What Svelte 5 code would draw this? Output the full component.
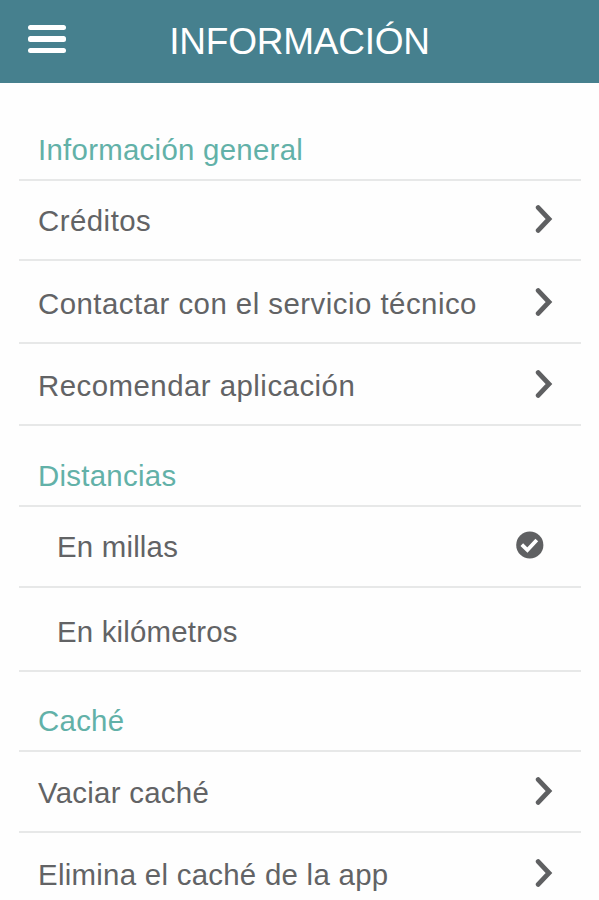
<script lang="ts">
	// Settings / information screen: grouped rows under a fixed title bar.
	const sections = [
		{
			title: 'Información general',
			kind: 'general',
			items: ['Créditos', 'Contactar con el servicio técnico', 'Recomendar aplicación']
		},
		{ title: 'Distancias', kind: 'options', items: ['En millas', 'En kilómetros'] },
		{ title: 'Caché', kind: 'cache', items: ['Vaciar caché', 'Elimina el caché de la app'] }
	];

	let unit = $state('En millas');
</script>

<div class="screen">
	<header class="bar">
		<button class="menu" aria-label="Menú">
			<span></span>
			<span></span>
			<span></span>
		</button>
		<h1>INFORMACIÓN</h1>
	</header>

	<main>
		{#each sections as section (section.title)}
			<section class={section.kind}>
				<h2>{section.title}</h2>
				{#each section.items as item (item)}
					{#if section.kind === 'options'}
						<button class="row" onclick={() => (unit = item)}>
							<span class="label">{item}</span>
							{#if unit === item}
								<svg class="check" width="28" height="28" viewBox="0 0 28 28">
									<circle cx="13.8" cy="14" r="13.6" fill="#5f6062" />
									<path d="M5.8 13.6l5.6 5.4L20.8 9" fill="none" stroke="#fff" stroke-width="3.8" />
								</svg>
							{/if}
						</button>
					{:else}
						<button class="row">
							<span class="label">{item}</span>
							<svg class="chevron" width="18" height="28" viewBox="0 0 18 28">
								<path
									d="M3.2 2.6L14 14L3.2 25.4"
									fill="none"
									stroke="#5f6062"
									stroke-width="4.8"
									stroke-linecap="round"
								/>
							</svg>
						</button>
					{/if}
				{/each}
			</section>
		{/each}
	</main>
</div>

<style>
	:global(body) {
		background: #fefefe;
	}
	.screen {
		height: 900px;
		overflow: hidden;
		background: #fefefe;
		font-family: 'Liberation Sans', Arial, sans-serif;
	}

	button {
		border: 0;
		margin: 0;
		padding: 0;
		background: none;
		font: inherit;
		text-align: left;
		cursor: pointer;
	}

	.bar {
		box-sizing: border-box;
		height: 83px;
		padding: 0 28px;
		display: grid;
		grid-template-columns: 38px 1fr 38px;
		align-items: center;
		background: #46808e;
	}
	.menu {
		display: flex;
		flex-direction: column;
		gap: 6px;
		margin-bottom: 5px;
	}
	.menu span {
		width: 38px;
		height: 5.4px;
		border-radius: 2.5px;
		background: #fff;
	}
	h1 {
		margin: 0;
		font-weight: 400;
		font-size: 37px;
		line-height: 42px;
		letter-spacing: -0.25px;
		text-align: center;
		color: #fff;
	}

	main {
		padding: 0 18px 0 19px;
	}
	h2,
	.row {
		box-sizing: border-box;
		width: 100%;
		display: flex;
		align-items: flex-end;
		border-bottom: 2px solid #e7e8e8;
		font-size: 29.4px;
		line-height: 34px;
		letter-spacing: 0.28px;
	}
	h2 {
		height: 81px;
		margin: 0;
		padding: 0 19px 12px;
		font-weight: 400;
		color: #62b1a8;
	}
	.row {
		height: 81px;
		padding: 0 28px 21px 19px;
		justify-content: space-between;
		color: #626365;
	}
	.chevron {
		margin-bottom: 5px;
	}
	.check {
		margin-bottom: 5px;
	}

	.general h2 {
		height: 98px;
	}
	.general .row {
		height: 82px;
		letter-spacing: 0.48px;
	}
	.general .row:nth-child(2) {
		height: 80px;
	}
	.general .row:nth-child(3) {
		height: 83px;
	}

	.options .row {
		padding: 0 37px 22px 38px;
		letter-spacing: 0.2px;
	}
	.options .row:last-child {
		height: 84px;
		padding-bottom: 21px;
	}

	.cache h2 {
		height: 80px;
	}
	.cache .row:last-child {
		height: 82px;
	}
</style>
